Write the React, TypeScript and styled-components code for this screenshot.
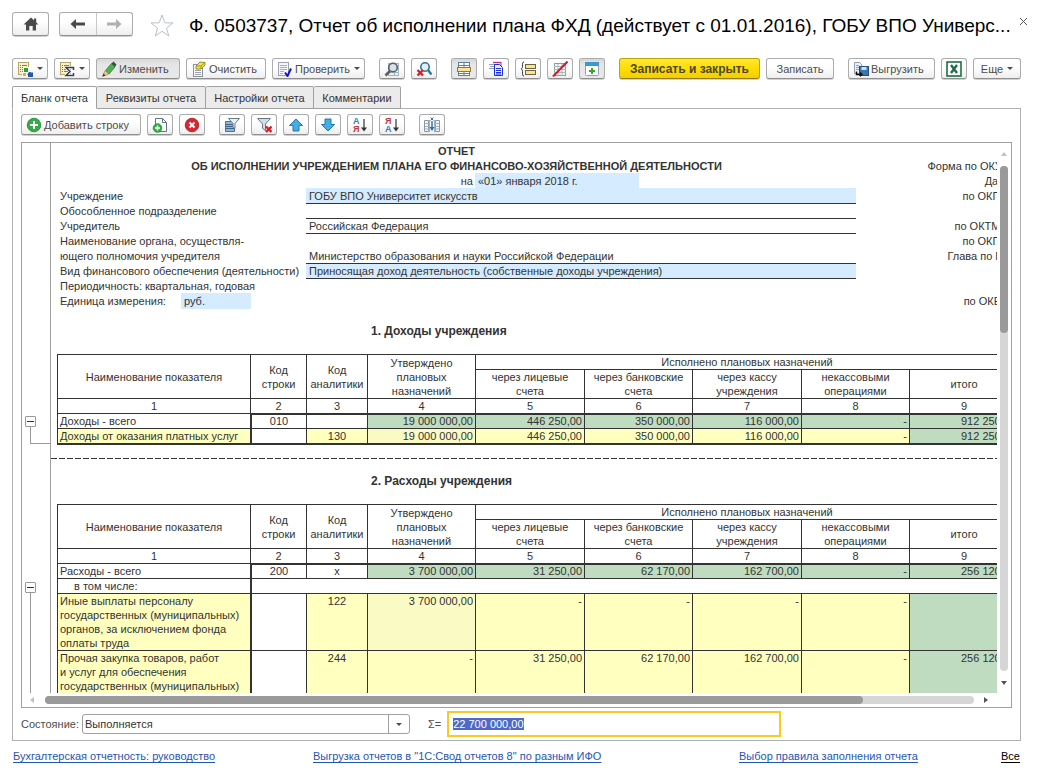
import React, { useEffect, useRef } from "react";
import styled, { createGlobalStyle, css } from "styled-components";

const LINE = "#333333";
const FRAME = "#a0a0a0";
const YELLOW = "#ffffc0";
const PALE = "#fafac4";
const GREEN = "#c0dcc0";
const BLUE = "#d5ebff";

const GlobalStyle = createGlobalStyle`
  *, *::before, *::after { box-sizing: border-box; }
  body {
    margin: 0;
    background: #ffffff;
    color: #333333;
    font-family: "Liberation Sans", Arial, sans-serif;
    font-size: 11px;
  }
  button, input, select { font: inherit; color: inherit; }
`;

const Page = styled.div`
  display: flex;
  flex-direction: column;
  height: 100vh;
  min-height: 480px;
  overflow: hidden;
`;

/* ---------- title bar ---------- */

const TitleBar = styled.header`
  display: flex;
  align-items: flex-start;
  padding: 12px 10px 0 12px;
  height: 58px;
`;

const buttonFace = css`
  border: 1px solid #acacac;
  border-bottom-color: #8f8f8f;
  border-radius: 3px;
  background: linear-gradient(#ffffff 40%, #eeeeee);
  box-shadow: 0 1px 0 #d0d0d0;
  padding: 0;
  cursor: pointer;
`;

const HomeButton = styled.button`
  ${buttonFace}
  display: flex;
  align-items: center;
  justify-content: center;
  width: 37px;
  height: 24px;
`;

const NavPair = styled.div`
  ${buttonFace}
  display: flex;
  width: 74px;
  height: 24px;
  margin-left: 10px;
`;

const NavButton = styled.button`
  display: flex;
  align-items: center;
  justify-content: center;
  flex: 1;
  border: 0;
  padding: 0;
  background: none;
  & + & { border-left: 1px solid #c8c8c8; }
`;

const StarButton = styled.button`
  display: flex;
  border: 0;
  padding: 0;
  margin-left: 17px;
  background: none;
`;

const Title = styled.h1`
  flex: 1;
  min-width: 0;
  margin: 0 0 0 15px;
  font-size: 19px;
  font-weight: 400;
  line-height: 27px;
  color: #000000;
  white-space: nowrap;
`;

const CloseButton = styled.button`
  display: flex;
  border: 0;
  padding: 5px 0 0;
  background: none;
`;

/* ---------- toolbars ---------- */

const Toolbar = styled.div<{ $inner?: boolean }>`
  display: flex;
  gap: 14px;
  padding: ${(p) => (p.$inner ? "0" : "0 17px 0 12px")};
  margin-bottom: 7px;
`;

const Group = styled.div<{ $end?: boolean }>`
  display: flex;
  gap: 6px;
  margin-left: ${(p) => (p.$end ? "auto" : "0")};
`;

const Tool = styled.button<{ $w?: number; $start?: boolean; $pressed?: boolean; $primary?: boolean }>`
  ${buttonFace}
  display: flex;
  align-items: center;
  justify-content: ${(p) => (p.$start ? "flex-start" : "center")};
  gap: ${(p) => (p.$start ? 2 : 4)}px;
  padding: ${(p) => (p.$start ? "0 4px" : "0")};
  flex: none;
  width: ${(p) => p.$w ?? 26}px;
  height: 21px;
  color: #4d4d4d;
  white-space: nowrap;
  ${(p) =>
    p.$pressed &&
    css`
      background: linear-gradient(#d8d8d8, #e6e6e6 30%, #e8e8e8);
    `}
  ${(p) =>
    p.$primary &&
    css`
      background: linear-gradient(#ffe838, #ffdd00 50%, #f2ce00);
      border-color: #c2a300;
      border-bottom-color: #937c00;
      font-size: 12px;
      font-weight: 700;
      color: #4a4630;
    `}
`;

const Drop = styled.span`
  display: flex;
  margin-left: auto;
`;

const Icon = styled.svg`
  display: block;
  flex: none;
`;

/* ---------- tabs and panel ---------- */

const Tabs = styled.div`
  display: flex;
  padding-left: 12px;
`;

const Tab = styled.button<{ $w: number; $active?: boolean }>`
  width: ${(p) => p.$w}px;
  height: 23px;
  padding: 0;
  margin-bottom: -1px;
  border: 1px solid ${FRAME};
  border-bottom-color: ${(p) => (p.$active ? "#ffffff" : FRAME)};
  border-radius: 2px 2px 0 0;
  background: ${(p) => (p.$active ? "#ffffff" : "#ebebeb")};
  position: relative;
  & + & { border-left: 0; }
`;

const Panel = styled.main`
  flex: 1;
  min-height: 0;
  display: flex;
  flex-direction: column;
  margin: 0 17px 0 12px;
  padding: 5px 8px 3px 8px;
  border: 1px solid #b0b0b0;
`;

/* ---------- sheet ---------- */

const Sheet = styled.section`
  flex: 1;
  min-height: 0;
  display: grid;
  grid-template-columns: 30px minmax(0, 1fr) 14px;
  grid-template-rows: minmax(0, 1fr) 14px;
  border: 1px solid ${FRAME};
`;

const Gutter = styled.div`
  display: flex;
  flex-direction: column;
  overflow: hidden;
  margin-right: 1px;
  border-right: 1px solid ${FRAME};
`;

const TreeSpace = styled.div<{ $h: number }>`
  flex: none;
  height: ${(p) => p.$h}px;
`;

const TreeButton = styled.button`
  display: flex;
  align-items: center;
  justify-content: center;
  flex: none;
  width: 11px;
  height: 11px;
  margin-left: 3px;
  padding: 0;
  border: 1px solid #999999;
  border-radius: 1px;
  background: #ffffff;
  &::before {
    content: "";
    width: 7px;
    height: 1px;
    background: #333333;
  }
`;

const TreeLine = styled.div<{ $h?: number }>`
  flex: ${(p) => (p.$h ? "none" : "1")};
  height: ${(p) => (p.$h ? `${p.$h}px` : "auto")};
  margin-left: 8px;
  border-left: 1px solid #999999;
  border-bottom: ${(p) => (p.$h ? "1px solid #999999" : "0")};
`;

const Doc = styled.div`
  overflow: hidden;
  margin-left: -1px;
`;

const Form = styled.div`
  width: 961px;
  margin-left: 6px;
  line-height: 17px;
`;

const FormTitle = styled.div`
  width: 799px;
  height: 15px;
  font-weight: 700;
  text-align: center;
  white-space: nowrap;
`;

const FormRow = styled.div<{ $date?: boolean; $tall?: boolean }>`
  display: grid;
  grid-template-columns: ${(p) => (p.$date ? "418px 164px" : "249px 550px")} minmax(0, 1fr);
  grid-template-rows: ${(p) => (p.$tall ? 16 : 15)}px;
  white-space: nowrap;
`;

const FormLabel = styled.div<{ $right?: boolean }>`
  display: flex;
  justify-content: ${(p) => (p.$right ? "flex-end" : "flex-start")};
  padding: 0 2px 0 3px;
`;

const FormValue = styled.div<{ $fill?: boolean; $rule?: boolean }>`
  padding-left: 3px;
  background: ${(p) => (p.$fill ? BLUE : "transparent")};
  border-top: ${(p) => (p.$rule ? `1px solid ${LINE}` : "0")};
  line-height: ${(p) => (p.$rule ? 15 : 17)}px;
`;

const FormCode = styled.div`
  padding-right: 9px;
  text-align: right;
`;

const UnitName = styled.span`
  flex: none;
  width: 121px;
`;

const UnitValue = styled.span`
  width: 70px;
  padding-left: 3px;
  background: ${BLUE};
`;

const TitleSpan = styled.div`
  display: grid;
  grid-template-columns: 799px minmax(0, 1fr);
  height: 15px;
`;

const SectionTitle = styled.h2`
  margin: 0 0 0 6px;
  padding-left: 314px;
  height: 45px;
  line-height: 45px;
  font-size: 12px;
  font-weight: 700;
`;

const PageBreak = styled.div`
  height: 14px;
  padding-top: 13px;
  background: repeating-linear-gradient(90deg, ${LINE} 0 6px, transparent 6px 8px) content-box;
`;

const Table = styled.table`
  width: 961px;
  margin-left: 6px;
  table-layout: fixed;
  border-collapse: separate;
  border-spacing: 0;
  line-height: 14px;
`;

const Head = styled.th`
  padding: 0;
  border-top: 1px solid ${LINE};
  border-left: 1px solid ${LINE};
  font-weight: 400;
  text-align: center;
`;

type CellProps = {
  $fill?: string;
  $align?: "left" | "center";
  $top?: boolean;
  $left?: boolean;
  $bottom?: boolean;
  $indent?: boolean;
};

const Cell = styled.td<CellProps>`
  padding: 0 2px 0 ${(p) => (p.$indent ? 16 : 2)}px;
  border: 0 solid ${LINE};
  border-top-width: ${(p) => (p.$top ? 2 : 1)}px;
  border-left-width: ${(p) => (p.$left ? 2 : 1)}px;
  border-bottom-width: ${(p) => (p.$bottom ? 2 : 0)}px;
  background: ${(p) => p.$fill ?? "#ffffff"};
  text-align: ${(p) => p.$align ?? "right"};
  vertical-align: ${(p) => (p.$top ? "bottom" : "top")};
  line-height: ${(p) => (p.$top ? 13 : 14)}px;
  white-space: pre-line;
`;

const Row = styled.tr<{ $h: number }>`
  height: ${(p) => p.$h}px;
`;

const VBar = styled.div`
  display: flex;
  flex-direction: column;
  align-items: center;
  padding: 9px 0 8px;
`;

const HBar = styled.div`
  grid-column: 1 / -1;
  display: flex;
  align-items: center;
  padding: 0 22px 0 8px;
`;

const VTrack = styled.div`
  flex: 1;
  width: 8px;
  margin: 10px 0;
  border-radius: 4px;
  background: #d6d6d6;
`;

const HTrack = styled.div`
  flex: 1;
  height: 8px;
  margin: 0 10px;
  border-radius: 4px;
  background: #d6d6d6;
`;

const VThumb = styled.div`
  height: 33%;
  border-radius: 4px;
  background: #9a9a9a;
`;

const HThumb = styled.div`
  width: 88%;
  height: 8px;
  border-radius: 4px;
  background: #9a9a9a;
`;

/* ---------- footer ---------- */

const StateBar = styled.div`
  display: flex;
  align-items: center;
  height: 26px;
  margin-top: 3px;
  color: #4d4d4d;
`;

const SelectBox = styled.div`
  display: grid;
  grid-template-columns: minmax(0, 1fr) 21px;
  width: 328px;
  height: 20px;
  margin-left: 3px;
  border: 1px solid ${FRAME};
  border-radius: 3px;
`;

const Select = styled.select`
  grid-area: 1 / 1 / 2 / 3;
  appearance: none;
  border: 0;
  padding: 0 24px 0 2px;
  background: transparent;
  color: #333333;
  outline: 0;
`;

const SelectArrow = styled.span`
  grid-area: 1 / 2 / 2 / 3;
  display: flex;
  align-items: center;
  justify-content: center;
  border-left: 1px solid ${FRAME};
  pointer-events: none;
`;

const SumLabel = styled.label`
  margin: 0 6px 0 18px;
`;

const SumInput = styled.input`
  width: 334px;
  height: 26px;
  padding: 0 4px;
  border: 2px solid #fcc91e;
  background: #ffffff;
  outline: 0;
  &::selection { background: #4f69c6; color: #ffffff; }
`;

const Links = styled.footer`
  display: grid;
  grid-template-columns: 300fr 426fr 262fr auto;
  justify-items: start;
  padding: 7px 18px 0 13px;
  height: 31px;
  line-height: 16px;
  white-space: nowrap;
`;

const Link = styled.a<{ $plain?: boolean }>`
  color: ${(p) => (p.$plain ? "#000000" : "#1f55b5")};
  text-underline-offset: 2px;
`;

/* ---------- icons ---------- */

type Kids = { children: React.ReactNode; w?: number; h?: number };
const Glyph = ({ children, w = 16, h = 16 }: Kids) => (
  <Icon width={w} height={h} viewBox={`0 0 ${w} ${h}`} aria-hidden="true">
    {children}
  </Icon>
);

const Caret = ({ color = "#4d4d4d" }) => (
  <Glyph w={6} h={3}>
    <path d="M0 0h6L3 3z" fill={color} />
  </Glyph>
);

const ArrowUp = () => (
  <Glyph w={6} h={4}>
    <path d="M3 0l3 4H0z" fill="#c0c0c0" />
  </Glyph>
);
const ArrowDown = () => (
  <Glyph w={6} h={4}>
    <path d="M0 0h6L3 4z" fill="#555555" />
  </Glyph>
);
const ArrowLeft = () => (
  <Glyph w={5} h={6}>
    <path d="M4 0v6L0 3z" fill="#c0c0c0" />
  </Glyph>
);
const ArrowRight = () => (
  <Glyph w={5} h={6}>
    <path d="M0 0v6l4-3z" fill="#555555" />
  </Glyph>
);

const HomeIcon = () => (
  <Glyph>
    <path d="M8 1.500L15.500 8.500H13V14.500H9.700V10H6.300v4.500H3V8.500H.5z" fill="#4a4a4a" />
    <path d="M11 2.500h2.200V7L11 5z" fill="#4a4a4a" />
  </Glyph>
);
const BackIcon = ({ color }: { color: string }) => (
  <Glyph>
    <path d="M.5 8L6 3v3.500h9v3H6V13z" fill={color} />
  </Glyph>
);
const ForwardIcon = ({ color }: { color: string }) => (
  <Glyph>
    <path d="M15.500 8L10 3v3.500H1v3h9V13z" fill={color} />
  </Glyph>
);
const StarIcon = () => (
  <Glyph w={24} h={26}>
    <path
      d="M12 3l2.800 7.800 8.200.2-6.500 5 2.300 8-6.800-4.700L5.200 24l2.300-8L1 11l8.200-.2z"
      fill="#ffffff"
      stroke="#b9c1c9"
    />
  </Glyph>
);
const CloseIcon = () => (
  <Glyph w={9} h={9}>
    <path d="M1 1l7 7M8 1L1 8" stroke="#555555" fill="none" />
  </Glyph>
);

const CreamDoc = () => (
  <>
    <rect x="1.5" y="1.500" width="10" height="12" fill="#fbf0bf" stroke="#b9a568" />
    <path d="M3 4.500h1M5 4.500h5M3 6.500h1M5 6.500h5M3 8.500h1M5 8.500h5M3 10.500h1M5 10.500h5" stroke="#8c7c4c" />
  </>
);
const StructureIcon = () => (
  <Glyph>
    <CreamDoc />
    <path d="M8.500 10v3M9 11.500h4.500V13" fill="none" stroke="#5b6a8c" />
    <rect x="6.500" y="6.500" width="5" height="5" fill="#23a33a" stroke="#ffffff" />
    <rect x="5.500" y="11.500" width="4" height="4" fill="#e3b11c" stroke="#ffffff" />
    <rect x="11" y="11.500" width="5" height="4.500" fill="#1f5ab0" />
  </Glyph>
);
const SumIcon = () => (
  <Glyph>
    <CreamDoc />
    <path d="M14.500 9V6.500H7l4 4-4 4h7.500V12" fill="none" stroke="#ffffff" strokeWidth="3" />
    <path d="M14.500 9V6.500H7l4 4-4 4h7.500V12" fill="none" stroke="#2f3f52" strokeWidth="1.500" />
  </Glyph>
);
const PencilIcon = () => (
  <Glyph>
    <path d="M4.500 9.500l6-7 3.500 3.500-6 7z" fill="#4caf50" stroke="#2c7a35" strokeWidth=".8" />
    <path d="M10.500 2.500L12.500 .5l3 3L14 6z" fill="#3e4a56" />
    <path d="M1.500 15.500l2.500-6L8 13z" fill="#edc68a" stroke="#a87840" strokeWidth=".6" />
    <path d="M1.500 15.500l1-3 2 2z" fill="#333333" />
  </Glyph>
);
const EraseIcon = () => (
  <Glyph>
    <rect x="2.500" y="3.500" width="9" height="12" fill="#f7f7f7" stroke="#8894a0" />
    <path d="M4 9.500h6M4 11.500h6M4 13.500h6" stroke="#9aa5b0" />
    <path d="M5 5l4-4 5 .5V4l-4 4H5z" fill="#f6e24a" stroke="#8f8422" strokeWidth=".9" />
    <path d="M5 5h5l4-3.500M10 5v3" fill="none" stroke="#8f8422" strokeWidth=".8" />
  </Glyph>
);
const CheckDocIcon = () => (
  <Glyph>
    <rect x="1.500" y="1.500" width="10" height="13" fill="#f6f7fa" stroke="#98a2b0" />
    <path d="M3 4.500h7M3 6.500h7M3 8.500h7M3 10.500h4M3 12.500h3" stroke="#a5aebd" />
    <path d="M8 11.500l2.500 3.500L14 7.500" fill="none" stroke="#1212e0" strokeWidth="2" />
  </Glyph>
);
const FindIcon = () => (
  <Glyph>
    <rect x="4.500" y="2.500" width="10" height="12" fill="#e7eef4" stroke="#a7b5c2" />
    <path d="M5 11.500h9M10.500 9v5" stroke="#9fb0be" />
    <circle cx="9" cy="6.500" r="4.300" fill="#d7e1e8" stroke="#5a5f66" strokeWidth="1.600" />
    <path d="M6 10l-4.500 4.500" stroke="#5a5f66" strokeWidth="2.600" />
  </Glyph>
);
const FindCancelIcon = () => (
  <Glyph>
    <circle cx="9" cy="6" r="4.200" fill="#e3f0f8" stroke="#2f7396" strokeWidth="1.600" />
    <path d="M12 9l3.500 4.500" stroke="#2f7396" strokeWidth="2.400" />
    <path d="M1.500 9l5.500 5.500M7 9l-5.500 5.500" stroke="#d4202b" strokeWidth="2.400" />
  </Glyph>
);
const RowsIcon = () => (
  <Glyph>
    <rect x="2.500" y="1.500" width="11" height="13" fill="#ffffff" stroke="#5f7f9c" />
    <path d="M2 4.500h12M2 12.500h12M8 2v13" stroke="#5f7f9c" />
    <rect x="1.500" y="6.500" width="13" height="4" fill="#fbe394" stroke="#8d7b3c" />
  </Glyph>
);
const CopyDocsIcon = () => (
  <Glyph>
    <path d="M1 3.500h6M2 5.500h5M1 7.500h6" stroke="#8fa0c4" />
    <path d="M5 1.500h8" stroke="#b8327a" strokeWidth="1.400" />
    <path d="M13 1v4" stroke="#b8327a" />
    <path d="M6.500 3.500h5l3 3v8h-8z" fill="#e8edff" stroke="#1a2fd0" />
    <path d="M8 7.500h5M8 9.500h5M8 11.500h5M8 13h5" stroke="#1a2fd0" />
  </Glyph>
);
const BracketIcon = () => (
  <Glyph>
    <path d="M4 1c-2 0-1.500 2-1.500 4.500S1 7.500 1 8s1.500 0 1.500 2.500S2 15 4 15" fill="none" stroke="#333333" />
    <rect x="5.500" y="3.500" width="10" height="4" fill="#fbe394" stroke="#6e6444" />
    <rect x="5.500" y="9.500" width="10" height="4" fill="#fbe394" stroke="#6e6444" />
  </Glyph>
);
const NoTableIcon = () => (
  <Glyph>
    <rect x="2.500" y="2.500" width="11" height="12" fill="#f4f6f8" stroke="#8d9aa6" />
    <path d="M2 5.500h12M2 8.500h12M2 11.500h12M6 3v12M10 3v12" stroke="#a9b5c0" />
    <path d="M1 15.500L15.500 .5" stroke="#dd1420" strokeWidth="2" />
  </Glyph>
);
const WindowPlusIcon = () => (
  <Glyph>
    <rect x="1.500" y="1.500" width="13" height="13" rx="1" fill="#ffffff" stroke="#8ba4ba" />
    <rect x="1" y="1" width="14" height="4" fill="#3b97d6" />
    <path d="M8 7v6M5 10h6" stroke="#3aa62b" strokeWidth="2" />
  </Glyph>
);
const ExportIcon = () => (
  <Glyph>
    <path d="M1.500 1.500h5l2 2v9h-7z" fill="#eef3f8" stroke="#8ba0b5" />
    <path d="M3 4.500h3M3 6.500h3M3 8.500h3" stroke="#8ba0b5" />
    <rect x="6.500" y="5.500" width="9" height="9" fill="#3a74b4" stroke="#1f4f86" />
    <rect x="8.500" y="6" width="5" height="3" fill="#cfe1f2" />
    <path d="M3.500 10.500v3h4" fill="none" stroke="#111111" strokeWidth="1.500" />
    <path d="M7 10.500l3 3-3 2.500z" fill="#111111" />
  </Glyph>
);
const ExcelIcon = () => (
  <Glyph>
    <rect x="1" y="1" width="14" height="14" fill="#ffffff" stroke="#1d7044" strokeWidth="1.600" />
    <path d="M5 4l6 8M11 4l-6 8" stroke="#1d7044" strokeWidth="2.400" />
  </Glyph>
);
const AddIcon = () => (
  <Glyph>
    <circle cx="8" cy="8" r="6.800" fill="#35aa47" stroke="#1f8a33" strokeWidth=".8" />
    <path d="M8 4v8M4 8h8" stroke="#ffffff" strokeWidth="2" />
  </Glyph>
);
const AddDocIcon = () => (
  <Glyph>
    <path d="M3.500 1.500h7l4 4v9h-11z" fill="#ffffff" stroke="#5f7486" />
    <path d="M10.500 1.500v4h4" fill="none" stroke="#5f7486" />
    <circle cx="5.500" cy="11" r="4.300" fill="#35aa47" stroke="#1f8a33" strokeWidth=".8" />
    <path d="M5.500 8.500v5M3 11h5" stroke="#ffffff" strokeWidth="1.500" />
  </Glyph>
);
const DeleteIcon = () => (
  <Glyph>
    <circle cx="8" cy="8" r="6.800" fill="#dc2430" stroke="#a81822" strokeWidth=".8" />
    <path d="M5.500 5.500l5 5M10.500 5.500l-5 5" stroke="#ffffff" strokeWidth="2" />
  </Glyph>
);
const FilterIcon = () => (
  <Glyph>
    <path d="M1.500 4.500h9v10h-9z" fill="#8fb6d9" stroke="#4b7397" />
    <path d="M2 7.500h8M2 9.500h8M2 11.500h8" stroke="#3d6587" />
    <path d="M4.500 1.500h11l-4.500 5v5l-2-1.500V6.500z" fill="#e9eef3" stroke="#68798a" />
  </Glyph>
);
const FilterCancelIcon = () => (
  <Glyph>
    <path d="M1.500 1.500h13l-5 5.500v6.500l-3-2V7z" fill="#d3dce4" stroke="#68798a" />
    <path d="M10 9.500l5.500 5.500M15.500 9.500L10 15" stroke="#d4202b" strokeWidth="2.400" />
  </Glyph>
);
const UpIcon = () => (
  <Glyph>
    <path d="M8 2l6.500 6.500H11V14H5V8.500H1.500z" fill="#41aee8" stroke="#2579ad" />
  </Glyph>
);
const DownIcon = () => (
  <Glyph>
    <path d="M8 14l6.500-6.500H11V2H5v5.500H1.500z" fill="#41aee8" stroke="#2579ad" />
  </Glyph>
);
const SortIcon = ({ top, bottom, flip }: { top: string; bottom: string; flip?: boolean }) => (
  <Glyph>
    <text x="1" y="7" fontSize="9" fontWeight="700" fill={flip ? "#c4343c" : "#2b7fc0"}>
      {top}
    </text>
    <text x="1" y="15" fontSize="9" fontWeight="700" fill={flip ? "#2b7fc0" : "#c4343c"}>
      {bottom}
    </text>
    <path d="M12 2v11" stroke="#333333" strokeWidth="1.200" />
    <path d="M9 10.500h6l-3 4z" fill="#333333" />
  </Glyph>
);
const ColumnsIcon = () => (
  <Glyph>
    <path d="M.5 3.500h4v11h-4zM11.500 3.500h4v11h-4z" fill="#f2f5f8" stroke="#8897a5" />
    <path d="M1 6.500h4M1 9.500h4M1 12h4M11 6.500h4M11 9.500h4M11 12h4M5.500 3v12M10.500 3v12" stroke="#a5b1bc" />
    <path d="M6.500 .5l3 3M9.500 .5l-3 3" stroke="#44708f" />
    <path d="M8 4v8" stroke="#2f6f9c" strokeWidth="1.400" />
    <path d="M5.500 10h5L8 14z" fill="#2f6f9c" />
  </Glyph>
);

/* ---------- data ---------- */

type Line = { name: string; code?: string; kind?: string; sums: string[] };

const incomeTotal: Line = {
  name: "Доходы - всего",
  code: "010",
  sums: ["19 000 000,00", "446 250,00", "350 000,00", "116 000,00", "-", "912 250,00"],
};
const incomeLines: Line[] = [
  {
    name: "Доходы от оказания платных услуг",
    kind: "130",
    sums: ["19 000 000,00", "446 250,00", "350 000,00", "116 000,00", "-", "912 250,00"],
  },
];
const costTotal: Line = {
  name: "Расходы - всего",
  code: "200",
  kind: "x",
  sums: ["3 700 000,00", "31 250,00", "62 170,00", "162 700,00", "-", "256 120,00"],
};
const costLines: Line[] = [
  {
    name: "Иные выплаты персоналу\nгосударственных (муниципальных)\nорганов, за исключением фонда\nоплаты труда",
    kind: "122",
    sums: ["3 700 000,00", "-", "-", "-", "-", ""],
  },
  {
    name: "Прочая закупка товаров, работ\nи услуг для обеспечения\nгосударственных (муниципальных)",
    kind: "244",
    sums: ["-", "31 250,00", "62 170,00", "162 700,00", "-", "256 120,00"],
  },
];

const widths = [193, 56, 61, 108, 109, 108, 109, 108, 109];

const TableHead = () => (
  <>
    <colgroup>
      {widths.map((w, i) => (
        <col key={i} width={w} />
      ))}
    </colgroup>
    <thead>
      <Row $h={15}>
        <Head rowSpan={2}>Наименование показателя</Head>
        <Head rowSpan={2}>
          Код
          <br />
          строки
        </Head>
        <Head rowSpan={2}>
          Код
          <br />
          аналитики
        </Head>
        <Head rowSpan={2}>
          Утверждено
          <br />
          плановых
          <br />
          назначений
        </Head>
        <Head colSpan={5}>Исполнено плановых назначений</Head>
      </Row>
      <Row $h={29}>
        <Head>
          через лицевые
          <br />
          счета
        </Head>
        <Head>
          через банковские
          <br />
          счета
        </Head>
        <Head>
          через кассу
          <br />
          учреждения
        </Head>
        <Head>
          некассовыми
          <br />
          операциями
        </Head>
        <Head>итого</Head>
      </Row>
      <Row $h={15}>
        {widths.map((_, i) => (
          <Head key={i}>{i + 1}</Head>
        ))}
      </Row>
    </thead>
  </>
);

const TotalRow = ({ line }: { line: Line }) => (
  <Row $h={15}>
    <Cell $align="left">{line.name}</Cell>
    <Cell $align="center" $top $left>
      {line.code}
    </Cell>
    <Cell $align="center" $top>
      {line.kind}
    </Cell>
    {line.sums.map((s, i) => (
      <Cell key={i} $top $fill={GREEN}>
        {s}
      </Cell>
    ))}
  </Row>
);

const LeafRow = ({ line, last, height }: { line: Line; last?: boolean; height: number }) => (
  <Row $h={height}>
    <Cell $align="left" $fill={YELLOW} $bottom={last}>
      {line.name}
    </Cell>
    <Cell $left $bottom={last} />
    <Cell $align="center" $fill={YELLOW} $bottom={last}>
      {line.kind}
    </Cell>
    {line.sums.map((s, i) => (
      <Cell
        key={i}
        $bottom={last}
        $fill={i === 5 ? GREEN : i === 0 && s !== "-" ? PALE : YELLOW}
      >
        {s}
      </Cell>
    ))}
  </Row>
);

/* ---------- application ---------- */

export default function App() {
  const sum = useRef<HTMLInputElement>(null);
  useEffect(() => {
    sum.current?.focus();
    sum.current?.select();
  }, []);

  return (
    <Page>
      <GlobalStyle />
      <TitleBar>
        <HomeButton aria-label="Домой">
          <HomeIcon />
        </HomeButton>
        <NavPair>
          <NavButton aria-label="Назад">
            <BackIcon color="#4a4a4a" />
          </NavButton>
          <NavButton aria-label="Вперед">
            <ForwardIcon color="#b0b0b0" />
          </NavButton>
        </NavPair>
        <StarButton aria-label="Избранное">
          <StarIcon />
        </StarButton>
        <Title>Ф. 0503737, Отчет об исполнении плана ФХД (действует с 01.01.2016), ГОБУ ВПО Универс...</Title>
        <CloseButton aria-label="Закрыть">
          <CloseIcon />
        </CloseButton>
      </TitleBar>

      <Toolbar>
        <Group>
          <Tool $w={36} $start aria-label="Структура">
            <StructureIcon />
            <Drop>
              <Caret />
            </Drop>
          </Tool>
          <Tool $w={36} $start aria-label="Итоги">
            <SumIcon />
            <Drop>
              <Caret />
            </Drop>
          </Tool>
          <Tool $w={84} $start $pressed>
            <PencilIcon />
            Изменить
          </Tool>
          <Tool $w={80} $start>
            <EraseIcon />
            Очистить
          </Tool>
          <Tool $w={93} $start>
            <CheckDocIcon />
            Проверить
            <Drop>
              <Caret />
            </Drop>
          </Tool>
        </Group>
        <Group>
          <Tool aria-label="Найти">
            <FindIcon />
          </Tool>
          <Tool aria-label="Отменить поиск">
            <FindCancelIcon />
          </Tool>
        </Group>
        <Group>
          <Tool $pressed aria-label="Строки">
            <RowsIcon />
          </Tool>
          <Tool aria-label="Копии">
            <CopyDocsIcon />
          </Tool>
          <Tool aria-label="Группировка">
            <BracketIcon />
          </Tool>
          <Tool aria-label="Скрыть таблицу">
            <NoTableIcon />
          </Tool>
          <Tool $pressed aria-label="Новое окно">
            <WindowPlusIcon />
          </Tool>
        </Group>
        <Group>
          <Tool $w={141} $primary>
            Записать и закрыть
          </Tool>
          <Tool $w={68}>Записать</Tool>
        </Group>
        <Group $end>
          <Tool $w={87} $start>
            <ExportIcon />
            Выгрузить
          </Tool>
          <Tool aria-label="Excel">
            <ExcelIcon />
          </Tool>
          <Tool $w={48}>
            Еще
            <Caret />
          </Tool>
        </Group>
      </Toolbar>

      <Tabs role="tablist">
        <Tab role="tab" $w={85} $active>
          Бланк отчета
        </Tab>
        <Tab role="tab" $w={109}>
          Реквизиты отчета
        </Tab>
        <Tab role="tab" $w={108}>
          Настройки отчета
        </Tab>
        <Tab role="tab" $w={87}>
          Комментарии
        </Tab>
      </Tabs>

      <Panel>
        <Toolbar $inner>
          <Group>
            <Tool $w={120} $start>
              <AddIcon />
              Добавить строку
            </Tool>
            <Tool aria-label="Добавить лист">
              <AddDocIcon />
            </Tool>
            <Tool aria-label="Удалить">
              <DeleteIcon />
            </Tool>
          </Group>
          <Group>
            <Tool aria-label="Отбор">
              <FilterIcon />
            </Tool>
            <Tool aria-label="Снять отбор">
              <FilterCancelIcon />
            </Tool>
            <Tool aria-label="Вверх">
              <UpIcon />
            </Tool>
            <Tool aria-label="Вниз">
              <DownIcon />
            </Tool>
            <Tool aria-label="По возрастанию">
              <SortIcon top="А" bottom="Я" />
            </Tool>
            <Tool aria-label="По убыванию">
              <SortIcon top="Я" bottom="А" flip />
            </Tool>
          </Group>
          <Group>
            <Tool aria-label="Колонки">
              <ColumnsIcon />
            </Tool>
          </Group>
        </Toolbar>

        <Sheet>
          <Gutter>
            <TreeSpace $h={273} />
            <TreeButton aria-label="Свернуть доходы" />
            <TreeLine $h={17} />
            <TreeSpace $h={138} />
            <TreeButton aria-label="Свернуть расходы" />
            <TreeLine />
          </Gutter>

          <Doc>
            <Form>
              <FormTitle>ОТЧЕТ</FormTitle>
              <TitleSpan>
                <FormTitle>ОБ ИСПОЛНЕНИИ УЧРЕЖДЕНИЕМ ПЛАНА ЕГО ФИНАНСОВО-ХОЗЯЙСТВЕННОЙ ДЕЯТЕЛЬНОСТИ</FormTitle>
                <FormCode>Форма по ОКУД</FormCode>
              </TitleSpan>
              <FormRow $date>
                <FormLabel $right>на</FormLabel>
                <FormValue $fill>«01» января 2018 г.</FormValue>
                <FormCode>Дата</FormCode>
              </FormRow>
              <FormRow>
                <FormLabel>Учреждение</FormLabel>
                <FormValue $fill>ГОБУ ВПО Университет искусств</FormValue>
                <FormCode>по ОКПО</FormCode>
              </FormRow>
              <FormRow>
                <FormLabel>Обособленное подразделение</FormLabel>
                <FormValue $rule />
              </FormRow>
              <FormRow>
                <FormLabel>Учредитель</FormLabel>
                <FormValue $rule>Российская Федерация</FormValue>
                <FormCode>по ОКТМО</FormCode>
              </FormRow>
              <FormRow>
                <FormLabel>Наименование органа, осуществля-</FormLabel>
                <FormValue $rule />
                <FormCode>по ОКПО</FormCode>
              </FormRow>
              <FormRow>
                <FormLabel>ющего полномочия учредителя</FormLabel>
                <FormValue>Министерство образования и науки Российской Федерации</FormValue>
                <FormCode>Глава по БК</FormCode>
              </FormRow>
              <FormRow>
                <FormLabel>Вид финансового обеспечения (деятельности)</FormLabel>
                <FormValue $fill $rule>
                  Приносящая доход деятельность (собственные доходы учреждения)
                </FormValue>
              </FormRow>
              <FormRow>
                <FormLabel>Периодичность: квартальная, годовая</FormLabel>
                <FormValue $rule />
              </FormRow>
              <FormRow $tall>
                <FormLabel>
                  <UnitName>Единица измерения:</UnitName>
                  <UnitValue>руб.</UnitValue>
                </FormLabel>
                <FormValue />
                <FormCode>по ОКЕИ</FormCode>
              </FormRow>
            </Form>

            <SectionTitle>1. Доходы учреждения</SectionTitle>
            <Table>
              <TableHead />
              <tbody>
                <TotalRow line={incomeTotal} />
                {incomeLines.map((l) => (
                  <LeafRow key={l.kind} line={l} height={17} last />
                ))}
              </tbody>
            </Table>
            <PageBreak />

            <SectionTitle>2. Расходы учреждения</SectionTitle>
            <Table>
              <TableHead />
              <tbody>
                <TotalRow line={costTotal} />
                <Row $h={15}>
                  <Cell $align="left" $indent>
                    в том числе:
                  </Cell>
                  <Cell $left colSpan={8} />
                </Row>
                {costLines.map((l) => (
                  <LeafRow key={l.kind} line={l} height={57} />
                ))}
              </tbody>
            </Table>
          </Doc>

          <VBar>
            <ArrowUp />
            <VTrack>
              <VThumb />
            </VTrack>
            <ArrowDown />
          </VBar>
          <HBar>
            <ArrowLeft />
            <HTrack>
              <HThumb />
            </HTrack>
            <ArrowRight />
          </HBar>
        </Sheet>

        <StateBar>
          <label htmlFor="state">Состояние:</label>
          <SelectBox>
            <Select id="state" defaultValue="run">
              <option value="run">Выполняется</option>
            </Select>
            <SelectArrow>
              <Caret />
            </SelectArrow>
          </SelectBox>
          <SumLabel htmlFor="sum">Σ=</SumLabel>
          <SumInput id="sum" ref={sum} defaultValue="22 700 000,00" />
        </StateBar>
      </Panel>

      <Links>
        <Link href="#guide">Бухгалтерская отчетность: руководство</Link>
        <Link href="#export">Выгрузка отчетов в "1С:Свод отчетов 8" по разным ИФО</Link>
        <Link href="#rules">Выбор правила заполнения отчета</Link>
        <Link href="#all" $plain>
          Все
        </Link>
      </Links>
    </Page>
  );
}
